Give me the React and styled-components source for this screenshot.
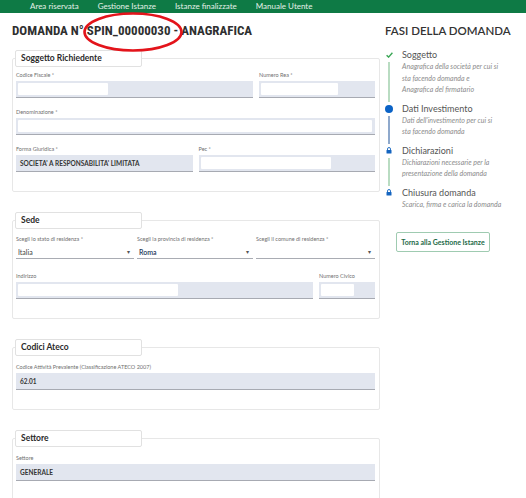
import React from 'react';
import styled, { createGlobalStyle } from 'styled-components';

const GlobalStyle = createGlobalStyle`
  html, body {
    margin: 0;
    padding: 0;
    background: #fff;
  }
  body {
    font-family: Lato, "Open Sans", "Liberation Sans", sans-serif;
    color: #333;
    overflow: hidden;
  }
  * {
    box-sizing: border-box;
  }
`;

const navItems = ['Area riservata', 'Gestione Istanze', 'Istanze finalizzate', 'Manuale Utente'];

const steps = [
  {
    title: 'Soggetto',
    desc: ['Anagrafica della società per cui si', 'sta facendo domanda e', 'Anagrafica del firmatario'],
    icon: 'check',
    line: '#b9dcc2'
  },
  {
    title: 'Dati Investimento',
    desc: ["Dati dell'investimento per cui si", 'sta facendo domanda'],
    icon: 'dot',
    line: '#8fa9cc'
  },
  {
    title: 'Dichiarazioni',
    desc: ['Dichiarazioni necessarie per la', 'presentazione della domanda'],
    icon: 'lock',
    line: '#b9dcc2'
  },
  {
    title: 'Chiusura domanda',
    desc: ['Scarica, firma e carica la domanda'],
    icon: 'lock'
  }
];

const CheckIcon = () => (
  <svg width="7" height="6" viewBox="0 0 7 6">
    <path d="M0.6 3.2 L2.6 5.1 L6.4 0.8" fill="none" stroke="#3aa655" strokeWidth="1.4" />
  </svg>
);

const LockIcon = () => (
  <svg width="6" height="7" viewBox="0 0 6 7">
    <path d="M1.5 3 V2 a1.5 1.5 0 0 1 3 0 V3" fill="none" stroke="#1565c0" strokeWidth="0.9" />
    <rect x="0.5" y="3" width="5" height="3.6" rx="0.5" fill="#1565c0" />
  </svg>
);

const StepIcon = ({ type }) => {
  if (type === 'check') return <CheckIcon />;
  if (type === 'lock') return <LockIcon />;
  return <Dot />;
};

const App = () => (
  <>
    <GlobalStyle />
    <TopBar>
      {navItems.map(item => (
        <NavLink key={item}>{item}</NavLink>
      ))}
    </TopBar>
    <Page>
      <LeftCol>
        <TitleWrap>
          <Title>DOMANDA N° SPIN_00000030 - ANAGRAFICA</Title>
          <Circle width="102" height="42" viewBox="0 0 102 42">
            <ellipse cx="51" cy="21" rx="48.5" ry="18.5" fill="none" stroke="#e3141b" strokeWidth="2.6" />
          </Circle>
        </TitleWrap>

        <Card>
          <Legend>Soggetto Richiedente</Legend>
          <Rows $top={4}>
            <Row $cols="237px 1fr">
              <Field label="Codice Fiscale *" fill={90} />
              <Field label="Numero Rea *" fill={77} />
            </Row>
            <Row>
              <Field label="Denominazione *" fill={354} />
            </Row>
            <Row $cols="1fr 1fr">
              <Field label="Forma Giuridica *" value="SOCIETA' A RESPONSABILITA' LIMITATA" />
              <Field label="Pec *" fill={130} />
            </Row>
          </Rows>
        </Card>

        <Card>
          <Legend>Sede</Legend>
          <Rows $gap={13}>
            <Row $cols="118px 116px 1fr" $gap={3}>
              <SelectField label="Scegli lo stato di residenza *" value="Italia" />
              <SelectField label="Scegli la provincia di residenza *" value="Roma" $navy />
              <SelectField label="Scegli il comune di residenza *" />
            </Row>
            <Row $cols="297px 1fr">
              <Field label="Indirizzo" fill={160} />
              <Field label="Numero Civico" fill={33} />
            </Row>
          </Rows>
        </Card>

        <Card>
          <Legend>Codici Ateco</Legend>
          <Rows $top={7}>
            <Row>
              <Field label="Codice Attività Prevalente (Classificazione ATECO 2007)" value="62.01" />
            </Row>
          </Rows>
        </Card>

        <Card>
          <Legend>Settore</Legend>
          <Rows $top={7}>
            <Row>
              <Field label="Settore" value="GENERALE" />
            </Row>
          </Rows>
        </Card>
      </LeftCol>

      <RightCol>
        <SideTitle>FASI DELLA DOMANDA</SideTitle>
        <Stepper>
          {steps.map(step => (
            <Step key={step.title}>
              <Rail>
                <IconBox>
                  <StepIcon type={step.icon} />
                </IconBox>
                {step.line && <RailLine $color={step.line} />}
              </Rail>
              <StepBody>
                <StepTitle>{step.title}</StepTitle>
                {step.desc.map(line => (
                  <StepDesc key={line}>{line}</StepDesc>
                ))}
              </StepBody>
            </Step>
          ))}
        </Stepper>
        <BackButton>Torna alla Gestione Istanze</BackButton>
      </RightCol>
    </Page>
  </>
);

const Field = ({ label, value, fill }) => (
  <FieldWrap>
    <Label>{label}</Label>
    <InputBox>
      {value && <Value>{value}</Value>}
      {fill && <Autofill style={{ width: fill }} />}
    </InputBox>
  </FieldWrap>
);

const SelectField = ({ label, value, $navy }) => (
  <FieldWrap>
    <Label>{label}</Label>
    <SelectBox>
      <SelectValue $navy={$navy}>{value}</SelectValue>
      <Caret>▾</Caret>
    </SelectBox>
  </FieldWrap>
);

const TopBar = styled.nav`
  display: flex;
  align-items: center;
  gap: 19px;
  height: 13px;
  padding-left: 30px;
  background: #0e7a45;
`;

const NavLink = styled.span`
  font-size: 8px;
  line-height: 13px;
  color: #e4f1e8;
  white-space: nowrap;
`;

const Page = styled.main`
  display: flex;
  padding-left: 12px;
`;

const LeftCol = styled.div`
  width: 368px;
  flex: none;
`;

const TitleWrap = styled.div`
  position: relative;
  height: 16px;
  margin: 10px 0 11px;
`;

const Title = styled.h1`
  margin: 0;
  font-family: "Roboto Condensed", Lato, sans-serif;
  font-size: 13px;
  line-height: 16px;
  font-weight: 700;
  color: #2f2f2f;
  white-space: nowrap;
`;

const Circle = styled.svg`
  position: absolute;
  left: 70px;
  top: -12px;
  pointer-events: none;
`;

const Card = styled.fieldset`
  margin: 0 0 20px;
  padding: 0 4px 19px 2px;
  min-width: 0;
  border: 1px solid #e7e7e7;
  border-radius: 2px;
`;

const Legend = styled.legend`
  width: 127px;
  height: 17px;
  padding: 0 5px;
  border: 1px solid #e1e1e1;
  border-radius: 2px;
  background: #fff;
  font-size: 8.5px;
  line-height: 15px;
  font-weight: 700;
  color: #2a2a2a;
`;

const Rows = styled.div`
  display: flex;
  flex-direction: column;
  gap: ${p => (p.$gap !== undefined ? p.$gap : 10)}px;
  padding: ${p => (p.$top !== undefined ? p.$top : 6)}px 0 0 1px;
`;

const Row = styled.div`
  display: grid;
  grid-template-columns: ${p => p.$cols || '1fr'};
  gap: ${p => (p.$gap !== undefined ? p.$gap : 6)}px;
`;

const FieldWrap = styled.div`
  display: flex;
  flex-direction: column;
  min-width: 0;
`;

const Label = styled.label`
  height: 8px;
  margin-bottom: 2px;
  font-size: 5.5px;
  line-height: 8px;
  color: #707070;
  white-space: nowrap;
`;

const InputBox = styled.div`
  display: flex;
  align-items: center;
  height: 17px;
  padding: 0 2px;
  background: #e2e6ef;
  border-bottom: 1.5px solid #a7aab2;
`;

const Autofill = styled.span`
  height: 12px;
  background: #fff;
  border-radius: 1px;
`;

const Value = styled.span`
  padding-left: 2px;
  font-size: 6.5px;
  font-weight: 700;
  color: #353535;
  white-space: nowrap;
`;

const SelectBox = styled.div`
  display: flex;
  align-items: center;
  justify-content: space-between;
  height: 14px;
  padding: 0 4px 0 2px;
  background: #fff;
  border-bottom: 1.5px solid #a9acb3;
`;

const SelectValue = styled.span`
  font-size: 7px;
  color: ${p => (p.$navy ? '#23375a' : '#444')};
  font-weight: ${p => (p.$navy ? 600 : 400)};
`;

const Caret = styled.span`
  font-size: 6px;
  color: #555;
`;

const RightCol = styled.aside`
  width: 136px;
  margin-left: 5px;
  flex: none;
`;

const SideTitle = styled.h2`
  margin: 10px 0 10px;
  font-size: 11.5px;
  line-height: 16px;
  font-weight: 600;
  color: #333;
  white-space: nowrap;
`;

const Stepper = styled.ol`
  margin: 0;
  padding: 0;
  list-style: none;
`;

const Step = styled.li`
  display: flex;
  gap: 9px;
`;

const Rail = styled.div`
  display: flex;
  flex-direction: column;
  align-items: center;
  width: 8px;
  flex: none;
`;

const IconBox = styled.div`
  display: flex;
  align-items: center;
  justify-content: center;
  height: 12px;
`;

const Dot = styled.span`
  width: 8px;
  height: 8px;
  border-radius: 50%;
  background: #0b63c6;
`;

const RailLine = styled.span`
  flex: 1;
  width: 1.5px;
  margin: 1px 0;
  background: ${p => p.$color};
`;

const StepBody = styled.div`
  padding-bottom: 7px;
`;

const StepTitle = styled.div`
  font-size: 9px;
  line-height: 12px;
  color: #555;
`;

const StepDesc = styled.div`
  font-size: 7px;
  line-height: 11.5px;
  font-style: italic;
  color: #8c8c8c;
  white-space: nowrap;
`;

const BackButton = styled.button`
  display: block;
  width: 94px;
  height: 20px;
  margin: 15px 0 0 11px;
  padding: 0;
  border: 1px solid #9fcbb1;
  border-radius: 2px;
  background: #fff;
  font-family: inherit;
  font-size: 7px;
  font-weight: 700;
  color: #1d6a47;
  cursor: pointer;
`;

export default App;
